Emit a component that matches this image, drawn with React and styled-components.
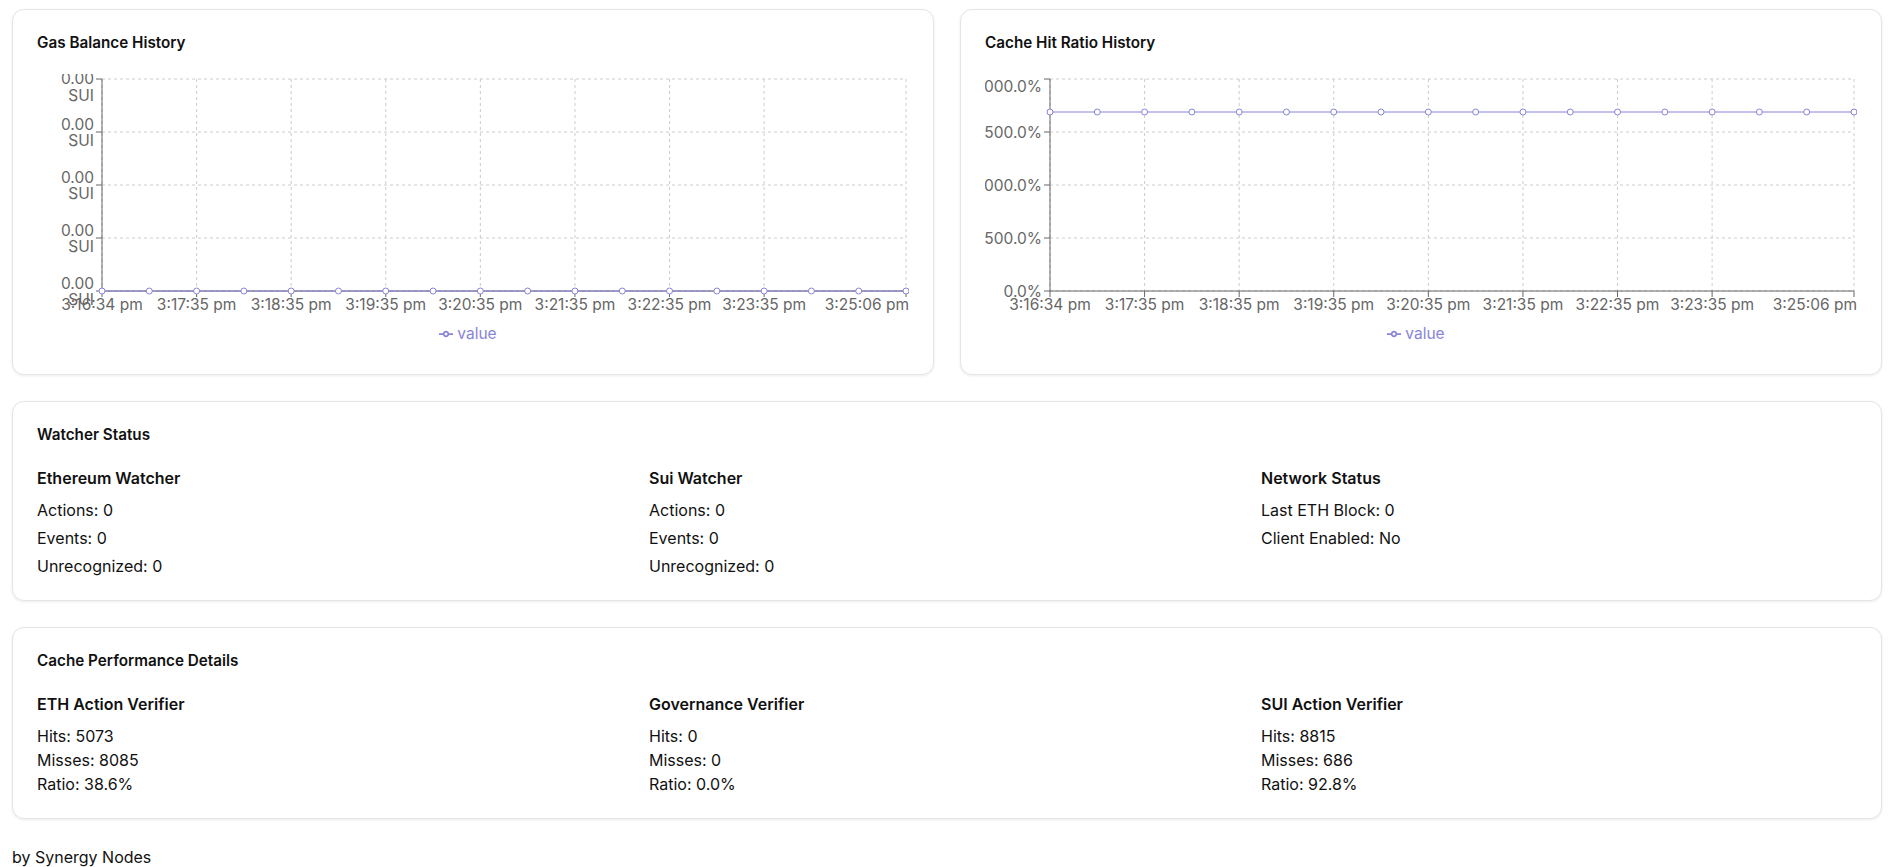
import React from 'react';
import styled, { createGlobalStyle } from 'styled-components';

const GlobalStyle = createGlobalStyle`
  body {
    margin: 0;
    background: #fff;
    color: #111;
    font-family: Inter, "Liberation Sans", Arial, sans-serif;
  }
`;

const Page = styled.div`
  display: flex;
  flex-direction: column;
  gap: 26px;
  padding: 9px 10px 0 12px;
`;

const ChartRow = styled.div`
  display: grid;
  grid-template-columns: 1fr 1fr;
  gap: 26px;
`;

const Card = styled.div`
  background: #fff;
  border: 1px solid #e5e5e5;
  border-radius: 12px;
  box-shadow: 0 1px 3px rgba(0, 0, 0, 0.08);
  padding: 20px 24px 22px;
`;

const CardTitle = styled.h3`
  margin: 1px 0 19px;
  font-size: 15.25px;
  line-height: 24px;
  font-weight: 600;
  color: #111;
`;

const ColumnGrid = styled.div`
  display: grid;
  grid-template-columns: repeat(3, 1fr);
  gap: 16px;
`;

const ColumnTitle = styled.h4`
  margin: 0 0 8px;
  font-size: 16px;
  line-height: 24px;
  font-weight: 600;
  color: #111;
`;

const StatList = styled.div`
  display: flex;
  flex-direction: column;
  gap: ${props => props.$gap}px;
`;

const Stat = styled.p`
  margin: 0;
  font-size: 16px;
  line-height: 24px;
  color: #111;
`;

const Footer = styled.div`
  font-size: 16px;
  line-height: 24px;
  color: #111;
`;

const ChartBox = styled.div`
  margin-bottom: 6px;
`;

const ChartSvg = styled.svg`
  display: block;
  overflow: hidden;
`;

const TickText = styled.text`
  font-family: Inter, "Liberation Sans", Arial, sans-serif;
  font-size: 15.5px;
  fill: #666;
`;

const LegendRow = styled.div`
  display: flex;
  justify-content: center;
  height: 24px;
  align-items: center;
`;

const LegendItem = styled.span`
  display: inline-flex;
  align-items: center;
  margin-right: 10px;
  font-size: 15.5px;
  line-height: 24px;
  color: #8884d8;
`;

const LegendIcon = styled.svg`
  margin-right: 4px;
`;

const W = 872;
const H = 248;
const PL = 65;
const PR = 869;
const PT = 5;
const PB = 217;
const COUNT = 18;
const STROKE = '#8884d8';

const pointX = (i) => PL + (i * (PR - PL)) / (COUNT - 1);

const timeTicks = [
  { i: 0, label: '3:16:34 pm' },
  { i: 2, label: '3:17:35 pm' },
  { i: 4, label: '3:18:35 pm' },
  { i: 6, label: '3:19:35 pm' },
  { i: 8, label: '3:20:35 pm' },
  { i: 10, label: '3:21:35 pm' },
  { i: 12, label: '3:22:35 pm' },
  { i: 14, label: '3:23:35 pm' },
  { i: 17, label: '3:25:06 pm', end: true },
];

function HistoryChart({ yLabels, lineY }) {
  const step = (PB - PT) / (yLabels.length - 1);
  // the top label is pushed down a bit so it stays inside the chart
  const yTicks = yLabels.map((lines, k) => ({
    y: PT + k * step,
    labelY: PT + k * step + (k === 0 ? 7.5 : 0),
    lines,
  }));
  const points = Array.from({ length: COUNT }, (_, i) => pointX(i));

  return (
    <ChartBox>
      <ChartSvg width={W} height={H}>
        <g stroke="#ccc" strokeDasharray="3 3" fill="none">
          {yTicks.map(t => (
            <line key={t.y} x1={PL} x2={PR} y1={t.y} y2={t.y} />
          ))}
          {timeTicks.map(t => (
            <line key={t.i} x1={pointX(t.i)} x2={pointX(t.i)} y1={PT} y2={PB} />
          ))}
        </g>

        <g stroke="#666" fill="none">
          <line x1={PL} x2={PL} y1={PT} y2={PB} />
          {yTicks.map(t => (
            <line key={t.y} x1={PL - 6} x2={PL} y1={t.y} y2={t.y} />
          ))}
          <line x1={PL} x2={PR} y1={PB} y2={PB} />
          {timeTicks.map(t => (
            <line key={t.i} x1={pointX(t.i)} x2={pointX(t.i)} y1={PB} y2={PB + 6} />
          ))}
        </g>

        {yTicks.map(t =>
          t.lines.length === 1 ? (
            <TickText key={t.y} x={PL - 8} y={t.labelY + 5.5} textAnchor="end">
              {t.lines[0]}
            </TickText>
          ) : (
            <TickText key={t.y} x={PL - 8} textAnchor="end">
              <tspan x={PL - 8} y={t.labelY - 8 + 5.5}>{t.lines[0]}</tspan>
              <tspan x={PL - 8} y={t.labelY + 8.5 + 5.5}>{t.lines[1]}</tspan>
            </TickText>
          )
        )}

        {timeTicks.map(t => (
          <TickText
            key={t.i}
            x={t.end ? W : pointX(t.i)}
            y={236}
            textAnchor={t.end ? 'end' : 'middle'}
          >
            {t.label}
          </TickText>
        ))}

        <line x1={PL} x2={PR} y1={lineY} y2={lineY} stroke={STROKE} strokeWidth="1" />
        {points.map((x, i) => (
          <circle key={i} cx={x} cy={lineY} r="3" stroke={STROKE} strokeWidth="1" fill="#fff" />
        ))}
      </ChartSvg>
      <LegendRow>
        <LegendItem>
          <LegendIcon width="14" height="14" viewBox="0 0 32 32">
            <path
              fill="none"
              stroke={STROKE}
              strokeWidth="4"
              d="M0,16h10.67A5.33,5.33,0,1,1,21.33,16H32M21.33,16A5.33,5.33,0,1,1,10.67,16"
            />
          </LegendIcon>
          value
        </LegendItem>
      </LegendRow>
    </ChartBox>
  );
}

const gasLabels = Array.from({ length: 5 }, () => ['0.00', 'SUI']);
const ratioLabels = [['2000.0%'], ['1500.0%'], ['1000.0%'], ['500.0%'], ['0.0%']];

const watchers = [
  { title: 'Ethereum Watcher', lines: ['Actions: 0', 'Events: 0', 'Unrecognized: 0'] },
  { title: 'Sui Watcher', lines: ['Actions: 0', 'Events: 0', 'Unrecognized: 0'] },
  { title: 'Network Status', lines: ['Last ETH Block: 0', 'Client Enabled: No'] },
];

const verifiers = [
  { title: 'ETH Action Verifier', hits: 5073, misses: 8085, ratio: '38.6%' },
  { title: 'Governance Verifier', hits: 0, misses: 0, ratio: '0.0%' },
  { title: 'SUI Action Verifier', hits: 8815, misses: 686, ratio: '92.8%' },
];

export default function App() {
  return (
    <>
      <GlobalStyle />
      <Page>
        <ChartRow>
          <Card>
            <CardTitle>Gas Balance History</CardTitle>
            <HistoryChart yLabels={gasLabels} lineY={PB} />
          </Card>
          <Card>
            <CardTitle>Cache Hit Ratio History</CardTitle>
            <HistoryChart yLabels={ratioLabels} lineY={38} />
          </Card>
        </ChartRow>

        <Card>
          <CardTitle>Watcher Status</CardTitle>
          <ColumnGrid>
            {watchers.map(w => (
              <div key={w.title}>
                <ColumnTitle>{w.title}</ColumnTitle>
                <StatList $gap={4}>
                  {w.lines.map(line => (
                    <Stat key={line}>{line}</Stat>
                  ))}
                </StatList>
              </div>
            ))}
          </ColumnGrid>
        </Card>

        <Card>
          <CardTitle>Cache Performance Details</CardTitle>
          <ColumnGrid>
            {verifiers.map(v => (
              <div key={v.title}>
                <ColumnTitle>{v.title}</ColumnTitle>
                <StatList $gap={0}>
                  <Stat>Hits: {v.hits}</Stat>
                  <Stat>Misses: {v.misses}</Stat>
                  <Stat>Ratio: {v.ratio}</Stat>
                </StatList>
              </div>
            ))}
          </ColumnGrid>
        </Card>

        <Footer>by Synergy Nodes</Footer>
      </Page>
    </>
  );
}
